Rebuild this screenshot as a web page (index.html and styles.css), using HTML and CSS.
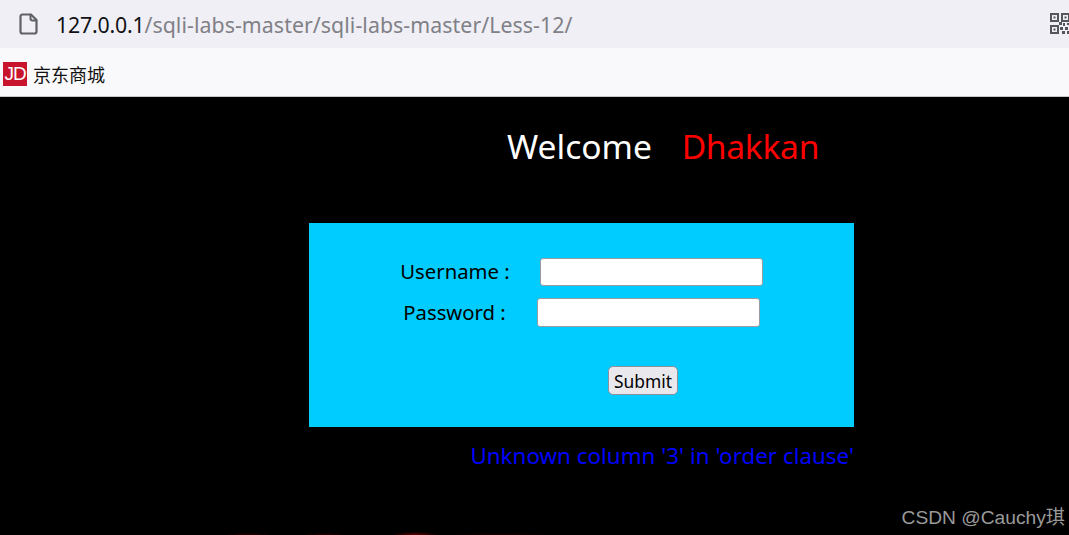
FILE: index.html
```html
<!DOCTYPE html>
<html lang="en">
<head>
    <meta charset="UTF-8">
    <meta name="viewport" content="width=device-width, initial-scale=1.0">
    <title>Less-12</title>
    <link rel="stylesheet" href="styles.css">
</head>
<body>
    <div class="address-bar">
        <svg class="page-icon" width="20" height="22" viewBox="0 0 20 22">
            <path d="M3.5 1.5h8.5l5.5 5.5v11.5a2 2 0 0 1-2 2h-12a2 2 0 0 1-2-2v-15a2 2 0 0 1 2-2z" fill="none" stroke="#5f6068" stroke-width="2.2"/>
            <path d="M11.5 1.5v4a2 2 0 0 0 2 2h4" fill="none" stroke="#5f6068" stroke-width="2"/>
        </svg>
        <div class="url"><span class="url-host">127.0.0.1</span>/sqli-labs-master/sqli-labs-master/Less-12/</div>
        <svg class="qr-icon" width="20" height="22" viewBox="0 0 20 22">
            <g fill="none" stroke="#55555c" stroke-width="2">
                <rect x="1" y="1" width="7" height="7"/>
                <rect x="12" y="1" width="7" height="7"/>
                <rect x="1" y="13" width="7" height="7"/>
            </g>
            <g fill="#55555c">
                <rect x="3.5" y="3.5" width="2" height="2"/>
                <rect x="14.5" y="3.5" width="2" height="2"/>
                <rect x="3.5" y="15.5" width="2" height="2"/>
                <rect x="9" y="9" width="3" height="3"/>
                <rect x="13" y="10" width="2" height="3"/>
                <rect x="17" y="10" width="3" height="2"/>
                <rect x="10" y="14" width="3" height="3"/>
                <rect x="15" y="14" width="3" height="3"/>
                <rect x="12" y="18" width="3" height="3"/>
                <rect x="17" y="18" width="3" height="3"/>
            </g>
        </svg>
    </div>

    <div class="bookmarks">
        <div class="bookmark">
            <span class="jd-logo">JD</span>
            <span>京东商城</span>
        </div>
    </div>

    <div class="page">
        <div class="welcome">Welcome <span class="welcome-name">Dhakkan</span></div>
        <form class="login-panel">
            <div class="field">
                <label class="field-label">Username :</label>
                <input class="field-input" type="text">
            </div>
            <div class="field field-password">
                <label class="field-label">Password :</label>
                <input class="field-input" type="password">
            </div>
            <div class="submit-row">
                <button class="submit-button" type="button">Submit</button>
            </div>
        </form>
        <div class="error">Unknown column '3' in 'order clause'</div>
        <div class="glow"></div>
        <div class="watermark">CSDN @Cauchy琪</div>
    </div>
</body>
</html>
```

FILE: styles.css
```css
html, body {
    margin: 0;
    height: 100%;
    overflow: hidden;
}
body {
    font-family: "Noto Sans", "Noto Sans CJK SC", sans-serif;
    background-color: #000;
    display: flex;
    flex-direction: column;
}
.address-bar {
    height: 48px;
    background-color: #efeff5;
    display: flex;
    align-items: center;
    padding-left: 19px;
}
.page-icon {
    flex: none;
}
.url {
    margin-left: 17px;
    font-size: 21.3px;
    letter-spacing: 0.07px;
    color: #808086;
    white-space: nowrap;
    flex: 1;
}
.url-host {
    color: #111114;
    letter-spacing: -0.2px;
}
.qr-icon {
    flex: none;
    margin-right: -1px;
}
.bookmarks {
    flex: none;
    height: 49px;
    box-sizing: border-box;
    background-color: #f9f9fb;
    border-bottom: 1px solid #c9c9cd;
    display: flex;
    align-items: center;
    padding-left: 3px;
    padding-top: 3px;
}
.bookmark {
    display: flex;
    align-items: center;
    gap: 6px;
    font-size: 18px;
    color: #111;
    font-family: "Noto Sans CJK SC", sans-serif;
}
.jd-logo {
    width: 24px;
    height: 24px;
    background-color: #c8142c;
    color: #fff;
    font-family: "Liberation Sans", sans-serif;
    font-size: 19px;
    line-height: 24px;
    text-align: center;
    letter-spacing: -1px;
}
.page {
    flex: 1;
    position: relative;
    background-color: #000;
    padding-left: 309px;
    padding-top: 26px;
}
.welcome {
    margin-left: 198px;
    font-size: 33.6px;
    line-height: 46px;
    color: #fff;
    word-spacing: 21px;
}
.welcome-name {
    color: #f00;
    letter-spacing: -0.3px;
}
.login-panel {
    width: 545px;
    height: 204px;
    margin-top: 54px;
    background-color: #0cf;
    box-sizing: border-box;
    padding-top: 35px;
}
.field {
    display: flex;
    justify-content: center;
    align-items: center;
    gap: 30px;
    height: 28px;
}
.field-password {
    margin-top: 12px;
    gap: 31px;
    height: 29px;
}
.field-label {
    font-size: 20.3px;
    line-height: 26px;
    padding-bottom: 2px;
    color: #000;
}
.field-input {
    width: 223px;
    height: 100%;
    box-sizing: border-box;
    background: #fff;
    border: 1px solid #9a9aa2;
    border-radius: 3px;
    padding: 0;
}
.submit-row {
    display: flex;
    justify-content: center;
    margin-top: 39px;
    padding-left: 123px;
}
.submit-button {
    width: 70px;
    height: 29px;
    box-sizing: border-box;
    background-color: #e9e9ed;
    border: 1px solid #8f8f9d;
    border-radius: 5px;
    font-family: "Noto Sans", sans-serif;
    font-size: 17.4px;
    color: #000;
    padding: 0;
}
.error {
    width: 545px;
    margin-top: 12px;
    text-align: right;
    font-size: 22.4px;
    line-height: 33px;
    color: #00f;
}
.glow {
    position: absolute;
    left: 0;
    right: 0;
    bottom: 0;
    height: 3px;
    background:
        radial-gradient(ellipse 24px 3px at 415px 100%, #6a0000, transparent),
        radial-gradient(ellipse 24px 2px at 325px 100%, #300000, transparent),
        radial-gradient(ellipse 24px 2px at 248px 100%, #300000, transparent),
        radial-gradient(ellipse 50px 2px at 500px 100%, #200000, transparent);
}
.watermark {
    position: absolute;
    right: 4px;
    bottom: 5px;
    font-family: "Liberation Sans", "Noto Sans CJK SC", sans-serif;
    font-size: 19.2px;
    color: #9a9a9a;
}
```
